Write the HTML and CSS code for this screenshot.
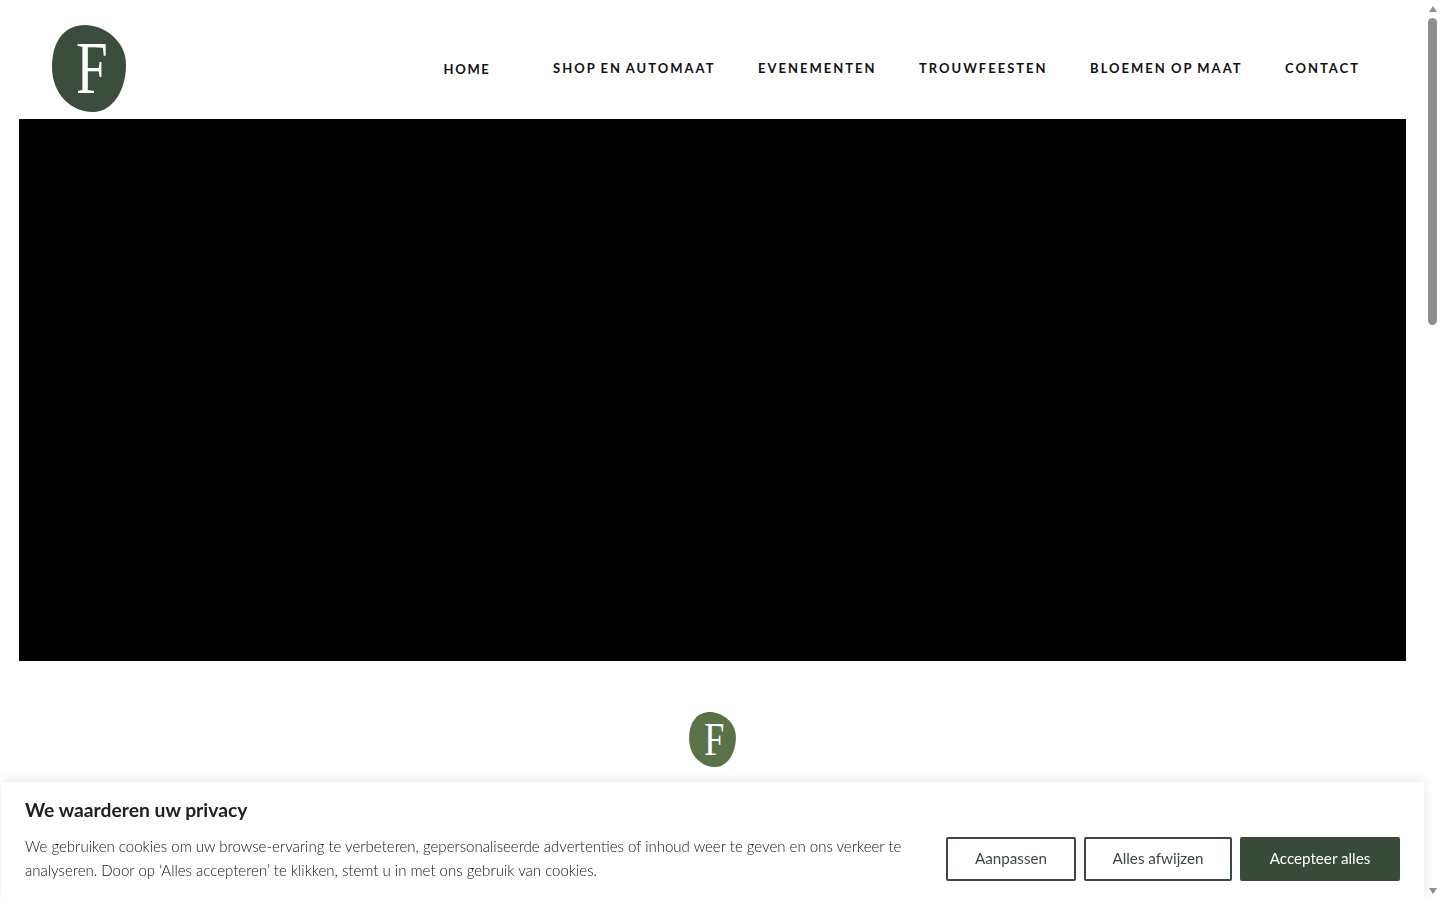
FILE: index.html
```html
<!DOCTYPE html>
<html lang="nl">
<head>
  <meta charset="UTF-8" />
  <meta name="viewport" content="width=device-width, initial-scale=1.0"/>
  <title>Bloemen</title>
  <link rel="stylesheet" href="styles.css">
</head>
<body>
  <div class="page">
    <header>
      <a href="#" class="logo">
        <svg width="74" height="87" viewBox="0 0 74 87">
          <path class="blob-dark" d="M33 0C50 0 74 14 74 40C74 66 60 87 41 87C20 87 0 70 0 42C0 14 14 0 33 0Z"/>
          <text class="logo-f" transform="translate(24 68) scale(.78 1)" font-size="73">F</text>
        </svg>
      </a>
      <nav>
        <a href="#" class="nav-home">HOME</a>
        <a href="#">SHOP EN AUTOMAAT</a>
        <a href="#">EVENEMENTEN</a>
        <a href="#">TROUWFEESTEN</a>
        <a href="#">BLOEMEN OP MAAT</a>
        <a href="#">CONTACT</a>
      </nav>
    </header>

    <main>
      <div class="hero"></div>
      <div class="intro-logo">
        <svg width="47" height="55" viewBox="0 0 74 87">
          <path class="blob-green" d="M33 0C50 0 74 14 74 40C74 66 60 87 41 87C20 87 0 70 0 42C0 14 14 0 33 0Z"/>
          <text class="logo-f" transform="translate(24 68) scale(.78 1)" font-size="73">F</text>
        </svg>
      </div>
    </main>
  </div>

  <div class="scrollbar">
    <span class="arrow-up"></span>
    <span class="thumb"></span>
    <span class="arrow-down"></span>
  </div>

  <section class="cookie">
    <h2>We waarderen uw privacy</h2>
    <div class="cookie-row">
      <p>We gebruiken cookies om uw browse-ervaring te verbeteren, gepersonaliseerde advertenties of inhoud weer te geven en ons verkeer te analyseren. Door op ‘Alles accepteren’ te klikken, stemt u in met ons gebruik van cookies.</p>
      <div class="cookie-buttons">
        <button class="btn btn-custom">Aanpassen</button>
        <button class="btn btn-reject">Alles afwijzen</button>
        <button class="btn btn-accept">Accepteer alles</button>
      </div>
    </div>
  </section>
</body>
</html>
```

FILE: styles.css
```css
html, body {
  height: 100%;
}

body {
  margin: 0;
  display: flex;
  overflow: hidden;
  font-family: "Lato", "Liberation Sans", sans-serif;
  background: #fff;
  color: #212121;
}

.page {
  flex: 1;
  min-width: 0;
}

header {
  height: 119px;
  display: flex;
  justify-content: space-between;
  padding: 0 65px 0 52px;
}

.logo {
  padding-top: 25px;
}

.logo-f {
  font-family: "Liberation Serif", serif;
  fill: #fff;
}

.blob-dark {
  fill: #3a4c3c;
}

.blob-green {
  fill: #5a7247;
}

nav {
  display: flex;
  gap: 42.5px;
  padding-top: 60px;
}

nav a {
  font-size: 13px;
  font-weight: 700;
  letter-spacing: 2px;
  word-spacing: -1px;
  line-height: 16px;
  color: #111;
  text-decoration: none;
}

.nav-home {
  margin-top: 1px;
  margin-right: 20px;
  letter-spacing: 1.7px;
}

.hero {
  height: 542px;
  margin: 0 19px;
  background: #000;
}

.intro-logo {
  display: flex;
  justify-content: center;
  padding-top: 51px;
}

.scrollbar {
  width: 15px;
  flex: none;
  display: flex;
  flex-direction: column;
  align-items: center;
  background: #fff;
}

.thumb {
  width: 9px;
  height: 307px;
  margin-top: 6px;
  border-radius: 5px;
  background: #8f8f8f;
}

.arrow-up,
.arrow-down {
  width: 0;
  height: 0;
  border-left: 4.5px solid transparent;
  border-right: 4.5px solid transparent;
}

.arrow-up {
  margin-top: 6px;
  border-bottom: 6px solid #8f8f8f;
}

.arrow-down {
  margin-top: auto;
  margin-bottom: 6px;
  border-top: 6px solid #8f8f8f;
}

.cookie {
  position: fixed;
  left: 1px;
  bottom: 0;
  width: 1423px;
  height: 118px;
  padding: 16px 24px 0;
  box-sizing: border-box;
  background: #fff;
  box-shadow: 0 -1px 10px rgba(172, 171, 171, 0.3);
}

.cookie h2 {
  margin: 0;
  font-size: 19.3px;
  line-height: 24px;
  font-weight: 700;
  color: #212121;
}

.cookie-row {
  display: flex;
  justify-content: space-between;
  margin-top: 12px;
}

.cookie p {
  width: 890px;
  margin: 0;
  font-size: 15.03px;
  font-weight: 300;
  line-height: 24px;
  color: #111;
}

.cookie-buttons {
  display: flex;
  gap: 8px;
  margin-top: 3px;
}

.btn {
  height: 44px;
  padding: 0 0 2px;
  border: 2px solid #3a4a3a;
  border-radius: 2px;
  font-family: inherit;
  font-size: 15.2px;
  color: #3a4a3a;
  background: #fff;
}

.btn-custom {
  width: 130px;
}

.btn-reject {
  width: 148px;
}

.btn-accept {
  width: 160px;
  color: #fff;
  background: #3a4a3a;
}
```
